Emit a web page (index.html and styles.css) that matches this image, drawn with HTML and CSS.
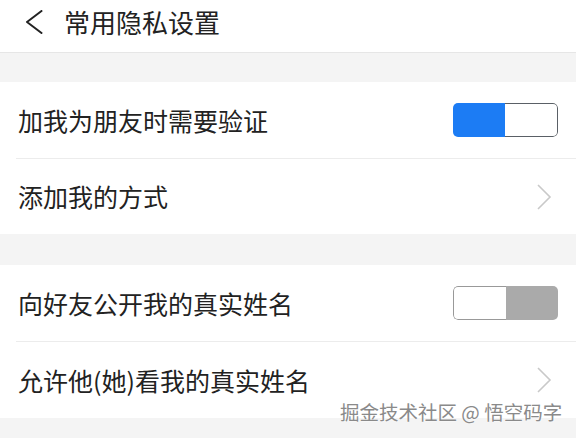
FILE: index.html
```html
<!DOCTYPE html>
<html lang="zh">
<head>
<meta charset="utf-8">
<link rel="stylesheet" href="styles.css">
</head>
<body>
<div class="page">
  <header class="header">
    <svg class="back" width="18" height="24" viewBox="0 0 18 24"><path d="M16.5 1 L2 12 L16.5 23" fill="none" stroke="#222" stroke-width="2" stroke-linecap="round" stroke-linejoin="round"/></svg>
    <h1 class="title">常用隐私设置</h1>
  </header>
  <div class="gap gap-first"></div>
  <section class="group">
    <div class="row">
      <span class="label">加我为朋友时需要验证</span>
      <div class="toggle on"><span class="half a"></span><span class="half b"></span></div>
    </div>
    <div class="sep"></div>
    <div class="row row-short">
      <span class="label">添加我的方式</span>
      <svg class="chev" width="16" height="26" viewBox="0 0 16 26"><path d="M2 1 L14 13 L2 25" fill="none" stroke="#c9c9c9" stroke-width="1.6"/></svg>
    </div>
  </section>
  <div class="gap gap-second"></div>
  <section class="group">
    <div class="row">
      <span class="label">向好友公开我的真实姓名</span>
      <div class="toggle off"><span class="half a"></span><span class="half b"></span></div>
    </div>
    <div class="sep"></div>
    <div class="row">
      <span class="label">允许他(她)看我的真实姓名</span>
      <svg class="chev" width="16" height="26" viewBox="0 0 16 26"><path d="M2 1 L14 13 L2 25" fill="none" stroke="#c9c9c9" stroke-width="1.6"/></svg>
    </div>
  </section>
  <div class="rest"></div>
  <div class="watermark">掘金技术社区 @ 悟空码字</div>
</div>
</body>
</html>
```
FILE: styles.css
```css
* { box-sizing: border-box; margin: 0; padding: 0; }
html, body { width: 576px; height: 438px; overflow: hidden; }
body {
  background: #f4f4f4;
  font-family: "Noto Sans CJK SC", "Noto Sans", sans-serif;
  color: #222;
}
.page { position: relative; width: 576px; height: 438px; display: flex; flex-direction: column; }
.header {
  height: 53px;
  background: #fff;
  border-bottom: 1px solid #e6e6e6;
  display: flex;
  align-items: center;
  padding-left: 25px;
  padding-bottom: 8px;
}
.back { margin-right: 21px; }
.title { font-size: 26px; font-weight: 400; color: #222; line-height: 1; }
.gap-first { height: 29px; }
.gap-second { height: 31px; }
.group { background: #fff; }
.row {
  height: 76px;
  display: flex;
  align-items: center;
  justify-content: space-between;
  padding-left: 18px;
  padding-right: 18px;
}
.row-short { height: 75px; }
.label { font-size: 25px; line-height: 1; color: #222; }
.sep { height: 1px; background: #ececec; margin-left: 16px; }
.toggle {
  width: 105px;
  height: 34px;
  display: flex;
  border-radius: 5px;
  overflow: hidden;
}
.half { flex: 1; }
.toggle.on .a { background: #1c7cf4; }
.toggle.on .b { background: #fff; border: 1.5px solid #5a6066; border-left: none; border-radius: 0 5px 5px 0; }
.toggle.off .a { background: #fff; border: 1.5px solid #999; border-right: none; border-radius: 5px 0 0 5px; }
.toggle.off .b { background: #aaaaaa; }
.chev { margin-right: 6px; }
.rest { flex: 1; }
.watermark {
  position: absolute;
  left: 340px;
  top: 400px;
  font-size: 19.5px;
  color: #8a8a8a;
  line-height: 24px;
  text-shadow: 0 0 2px #fff, 0 0 1px #fff;
  white-space: nowrap;
}
```
